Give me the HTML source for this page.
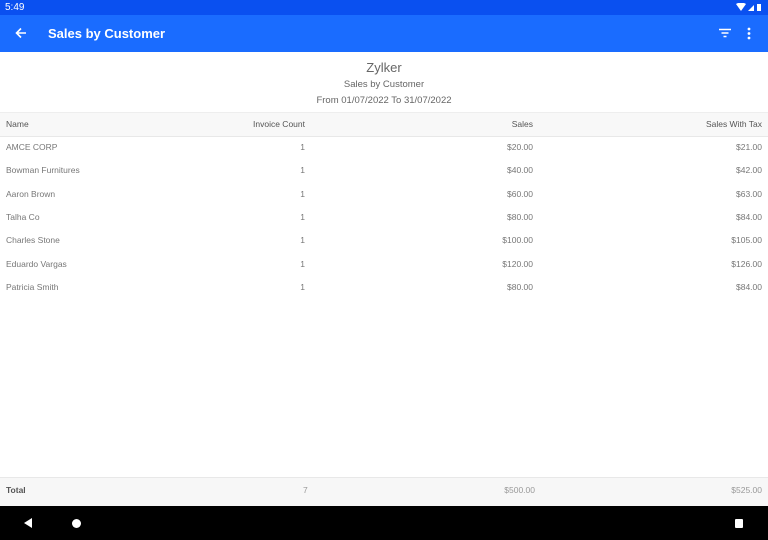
<!DOCTYPE html><html><head><style>
body{margin:0;width:768px;height:540px;position:relative;overflow:hidden;background:#fff;font-family:"Liberation Sans",sans-serif}
.sb{position:absolute;top:0;left:0;width:768px;height:15px;background:#0a50f0;color:#fff;font-size:10px}
.ab{position:absolute;top:15px;left:0;width:768px;height:37px;background:#1a6cff;color:#fff}
.t{position:absolute;left:48px;top:11px;font-size:13px;font-weight:bold}
.c{position:absolute;width:768px;text-align:center;color:#666}
.row{position:absolute;left:0;width:768px;height:23px;font-size:8.5px;color:#777}
.row span{position:absolute;top:0;line-height:23px}
.a{left:6px}.b{right:463px}.d{right:235px}.e{right:6px}
.hd{top:112px;background:#f8f8f8;border-top:1px solid #eee;border-bottom:1px solid #e8e8e8;color:#555}
.ft{position:absolute;top:477px;height:29px;width:768px;background:#f7f7f7;border-top:1px solid #e8e8e8;font-size:8.5px;color:#999}
.ft span{position:absolute;line-height:24px}
.nb{position:absolute;top:506px;left:0;width:768px;height:34px;background:#000}
</style></head><body>
<div class="sb"><span style="position:absolute;left:5px;top:2px">5:49</span>
<svg style="position:absolute;left:736px;top:3px" width="28" height="9"><path d="M0 1 Q5 -2 10 1 L5 8Z" fill="#fff"/><path d="M12 8 L18 2 L18 8Z" fill="#fff"/><rect x="21" y="1" width="4" height="7" fill="#fff"/></svg></div>
<div class="ab">
<svg style="position:absolute;left:15px;top:12px" width="12" height="12"><path d="M11 6H2M6 1.5L1.5 6 6 10.5" stroke="#fff" stroke-width="1.6" fill="none"/></svg>
<div class="t">Sales by Customer</div>
<svg style="position:absolute;left:719px;top:13px" width="12" height="10"><path d="M0 1.5h12M2.5 5h7M4.5 8.5h3" stroke="#fff" stroke-width="1.5"/></svg>
<svg style="position:absolute;left:747px;top:12px" width="4" height="13"><circle cx="2" cy="2" r="1.4" fill="#fff"/><circle cx="2" cy="6.5" r="1.4" fill="#fff"/><circle cx="2" cy="11" r="1.4" fill="#fff"/></svg>
</div>
<div class="c" style="top:60px;font-size:13px">Zylker</div>
<div class="c" style="top:79px;font-size:9.5px">Sales by Customer</div>
<div class="c" style="top:95px;font-size:9.5px">From 01/07/2022 To 31/07/2022</div>
<div class="row hd"><span class="a">Name</span><span class="b">Invoice Count</span><span class="d">Sales</span><span class="e">Sales With Tax</span></div>
<div class="row" style="top:136px"><span class="a">AMCE CORP</span><span class="b">1</span><span class="d">$20.00</span><span class="e">$21.00</span></div>
<div class="row" style="top:159px"><span class="a">Bowman Furnitures</span><span class="b">1</span><span class="d">$40.00</span><span class="e">$42.00</span></div>
<div class="row" style="top:183px"><span class="a">Aaron Brown</span><span class="b">1</span><span class="d">$60.00</span><span class="e">$63.00</span></div>
<div class="row" style="top:206px"><span class="a">Talha Co</span><span class="b">1</span><span class="d">$80.00</span><span class="e">$84.00</span></div>
<div class="row" style="top:229px"><span class="a">Charles Stone</span><span class="b">1</span><span class="d">$100.00</span><span class="e">$105.00</span></div>
<div class="row" style="top:253px"><span class="a">Eduardo Vargas</span><span class="b">1</span><span class="d">$120.00</span><span class="e">$126.00</span></div>
<div class="row" style="top:276px"><span class="a">Patricia Smith</span><span class="b">1</span><span class="d">$80.00</span><span class="e">$84.00</span></div>
<div class="ft"><span style="left:6px;color:#555;font-weight:bold">Total</span><span style="left:303px">7</span><span style="right:233px">$500.00</span><span style="right:6px">$525.00</span></div>
<div class="nb">
<svg style="position:absolute;left:23px;top:12px" width="10" height="10"><path d="M9 0V10L1 5Z" fill="#fff"/></svg>
<div style="position:absolute;left:72px;top:13px;width:9px;height:9px;border-radius:50%;background:#fff"></div>
<div style="position:absolute;left:735px;top:13px;width:8px;height:9px;border-radius:1px;background:#fff"></div>
</div>
</body></html>
